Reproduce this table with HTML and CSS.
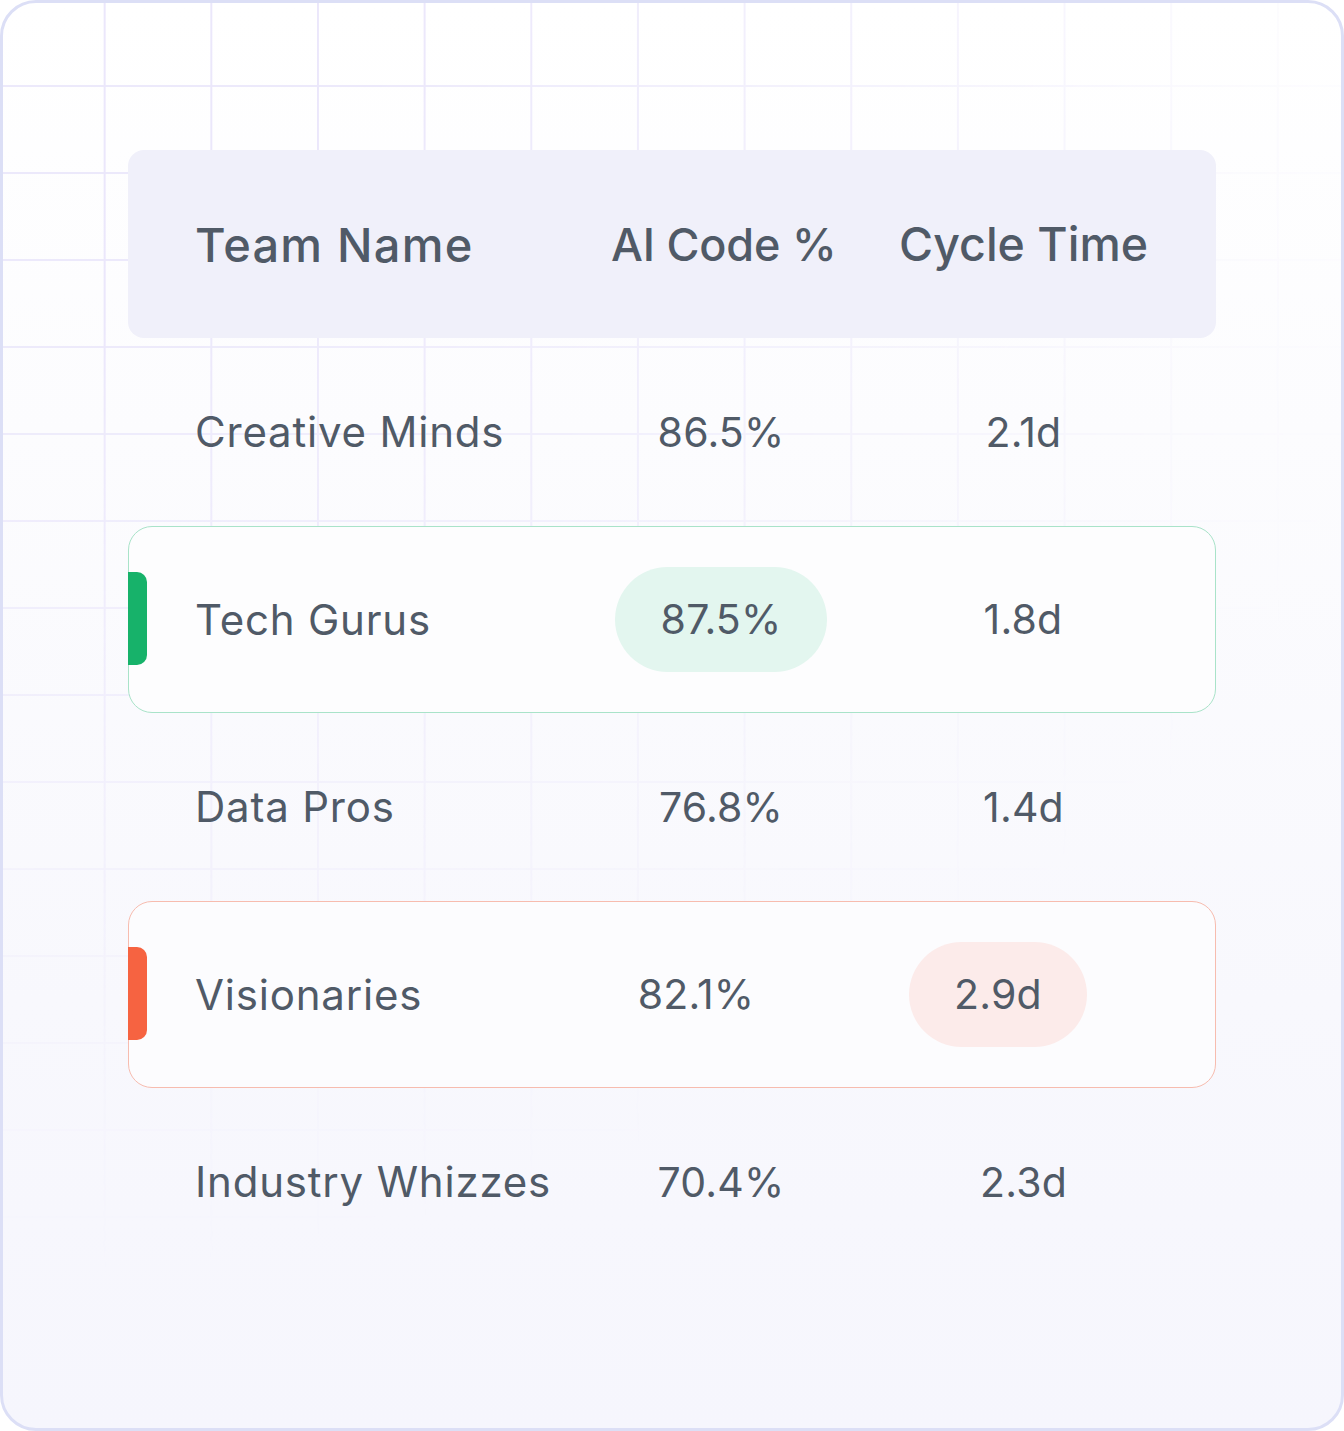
FILE: index.html
```html
<!DOCTYPE html>
<html>
<head>
<meta charset="utf-8">
<link rel="stylesheet" href="styles.css">
</head>
<body>
<div class="card">
  <div class="table">
    <div class="row head">
      <div class="c1">Team Name</div>
      <div class="c2">AI Code %</div>
      <div class="c3">Cycle Time</div>
    </div>
    <div class="row">
      <div class="c1">Creative Minds</div>
      <div class="c2">86.5%</div>
      <div class="c3">2.1d</div>
    </div>
    <div class="row hl good">
      <span class="marker"></span>
      <div class="c1">Tech Gurus</div>
      <div class="c2"><span class="pill pill-good">87.5%</span></div>
      <div class="c3">1.8d</div>
    </div>
    <div class="row">
      <div class="c1">Data Pros</div>
      <div class="c2">76.8%</div>
      <div class="c3">1.4d</div>
    </div>
    <div class="row hl bad shift">
      <span class="marker"></span>
      <div class="c1">Visionaries</div>
      <div class="c2">82.1%</div>
      <div class="c3"><span class="pill pill-bad">2.9d</span></div>
    </div>
    <div class="row">
      <div class="c1">Industry Whizzes</div>
      <div class="c2">70.4%</div>
      <div class="c3">2.3d</div>
    </div>
  </div>
</div>
</body>
</html>
```
FILE: styles.css
```css
* { box-sizing: border-box; }
html, body { margin: 0; padding: 0; background: #ffffff; }
body {
  font-family: "Inter", "Noto Sans", sans-serif;
  color: #505a67;
}
.card {
  position: relative;
  width: 1344px;
  height: 1431px;
  border: 3px solid #dcdff6;
  border-radius: 36px;
  padding: 147px 0 0 125px;
  background: linear-gradient(to bottom, #ffffff 0%, #fcfcfe 30%, #f8f8fd 70%, #f6f6fd 100%);
  overflow: hidden;
}
.card::before {
  content: "";
  position: absolute;
  top: -3px;
  left: -3px;
  right: -3px;
  bottom: -3px;
  background-image:
    linear-gradient(to right, transparent 104px, #ebe7fb 104px, #ebe7fb 106px, transparent 106px),
    linear-gradient(to bottom, transparent 85px, #ece9fb 85px, #ece9fb 87px, transparent 87px);
  background-size: 106.67px 100%, 100% 87px;
  background-repeat: repeat-x, repeat-y;
  -webkit-mask-image: radial-gradient(ellipse 110% 90% at 0% 0%, #000 25%, rgba(0,0,0,0.55) 60%, rgba(0,0,0,0.15) 85%, transparent 100%);
  mask-image: radial-gradient(ellipse 110% 90% at 0% 0%, #000 25%, rgba(0,0,0,0.55) 60%, rgba(0,0,0,0.15) 85%, transparent 100%);
}
.table {
  position: relative;
  z-index: 1;
  width: 1088px;
  display: flex;
  flex-direction: column;
}
.row {
  position: relative;
  height: 187.5px;
  display: grid;
  grid-template-columns: 416px 220px 1fr;
  align-items: center;
  padding-left: 67px;
  font-size: 41px;
  font-weight: 400;
  white-space: nowrap;
}
.row .c1 { font-size: 42px; letter-spacing: 0.8px; }
.row .c2, .row .c3 { text-align: center; letter-spacing: 0.2px; }
.head {
  height: 188px;
  background: #f0f0fa;
  border-radius: 16px;
  font-weight: 500;
}
.head .c1 { font-size: 47px; letter-spacing: 1.2px; }
.head .c2 { font-size: 45px; letter-spacing: -0.2px; }
.head .c3 { font-size: 46.5px; letter-spacing: 0; }
.hl {
  border: 1px solid #a9e3c9;
  border-radius: 24px;
  background: #fdfdfe;
  padding-left: 66px;
}
.hl.bad { border-color: #f7bcaf; background: #fcfcfe; }
.shift { grid-template-columns: 416px 170px 1fr; }
.marker {
  position: absolute;
  left: -1px;
  top: 45px;
  width: 19px;
  height: 93px;
  border-radius: 0 10px 10px 0;
  background: #17b26a;
}
.bad .marker { background: #f66341; }
.pill {
  display: inline-block;
  height: 105px;
  line-height: 105px;
  border-radius: 53px;
}
.pill-good { background: #e3f6ef; width: 212px; }
.pill-bad { background: #fcebea; width: 178px; }
```
